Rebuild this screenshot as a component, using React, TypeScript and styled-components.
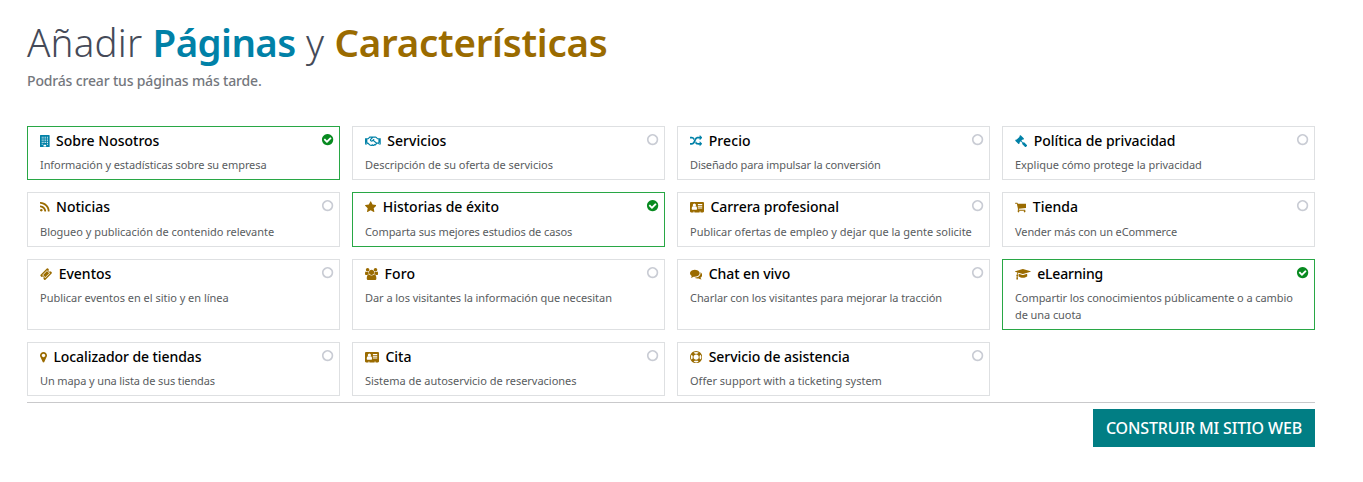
import React from 'react';
import styled, { createGlobalStyle } from 'styled-components';
import { FaRegHandshake } from 'react-icons/fa';

const GlobalStyle = createGlobalStyle`
  body {
    margin: 0;
    background: #fff;
    font-family: "Noto Sans", "Open Sans", sans-serif;
  }
`;

const BLUE = '#0081a7';
const GOLD = '#9a6b00';

const Page = styled.main`
  box-sizing: border-box;
  width: 1363px;
  height: 482px;
  padding: 15px 48px 0 27px;
`;

const Heading = styled.h1`
  margin: 0 0 1px;
  height: 54px;
  line-height: 54px;
  font-size: 38.5px;
  font-weight: 300;
  letter-spacing: 0.2px;
  color: #454a58;
  white-space: nowrap;
`;

const Accent = styled.span<{ $color: string; $track: number }>`
  font-weight: 600;
  color: ${(p) => p.$color};
  letter-spacing: ${(p) => p.$track}px;
`;

const Subtitle = styled.p`
  margin: 0 0 35px;
  height: 21px;
  line-height: 21px;
  font-size: 14px;
  font-weight: 500;
  letter-spacing: -0.16px;
  color: #74777d;
`;

const Grid = styled.section`
  display: grid;
  grid-template-columns: repeat(4, 313px);
  grid-template-rows: 54.4px 54.4px 71.2px 54.4px;
  gap: 12px;
`;

const Card = styled.article<{ $selected: boolean }>`
  position: relative;
  box-sizing: border-box;
  padding: 4px 12px 0;
  border: 1px solid ${(p) => (p.$selected ? '#28a745' : '#dee0e2')};
`;

const CardHeader = styled.header`
  display: flex;
  align-items: center;
  gap: 6.4px;
  height: 20px;
`;

const CardTitle = styled.h2<{ $track: number }>`
  margin: 0;
  font-size: 14px;
  line-height: 20px;
  font-weight: 500;
  color: #000;
  letter-spacing: ${(p) => p.$track}px;
  white-space: nowrap;
`;

const CardText = styled.p<{ $track: number }>`
  margin: 5.2px -4px 0 0;
  font-size: 11px;
  line-height: 17px;
  color: #595c60;
  letter-spacing: ${(p) => p.$track - 0.02}px;
`;

const IconBox = styled.span<{ $color: string }>`
  display: flex;
  flex: none;
  color: ${(p) => p.$color};

  svg {
    display: block;
    height: 12.25px;
    width: auto;
    fill: currentColor;
  }
`;

const StatusBadge = styled.span<{ $selected: boolean }>`
  position: absolute;
  top: 6px;
  right: 5px;
  color: ${(p) => (p.$selected ? '#088a20' : '#c9ccd4')};

  svg {
    display: block;
    width: 13.2px;
    height: 13.2px;
    fill: currentColor;
  }
`;

const Footer = styled.footer`
  display: flex;
  justify-content: flex-end;
  margin-top: 5.6px;
  padding-top: 6px;
  border-top: 1px solid #c9c9cb;
`;

const BuildButton = styled.button`
  width: 222px;
  height: 38px;
  padding: 0;
  border: 0;
  background: #017e84;
  color: #fff;
  font-family: inherit;
  font-size: 16px;
  font-weight: 500;
  letter-spacing: -0.14px;
  white-space: nowrap;
`;

const glyphs = {
  building: {
    box: '0 0 1408 1792',
    d: 'M1344 0q26 0 45 19t19 45v1664q0 26-19 45t-45 19h-1280q-26 0-45-19t-19-45v-1664q0-26 19-45t45-19zM256 256v128h128v-128zM512 256v128h128v-128zM768 256v128h128v-128zM1024 256v128h128v-128zM256 512v128h128v-128zM512 512v128h128v-128zM768 512v128h128v-128zM1024 512v128h128v-128zM256 768v128h128v-128zM512 768v128h128v-128zM768 768v128h128v-128zM1024 768v128h128v-128zM256 1024v128h128v-128zM512 1024v128h128v-128zM768 1024v128h128v-128zM1024 1024v128h128v-128zM256 1280v128h128v-128zM1024 1280v128h128v-128zM512 1408v256h384v-256z',
  },
  rss: {
    box: '192 0 1408 1792',
    d: 'M576 1344q0 80-56 136t-136 56-136-56-56-136 56-136 136-56 136 56 56 136zm512 123q2 28-17 48-18 21-47 21h-135q-25 0-43-16.5t-20-41.5q-22-229-184.5-391.5t-391.5-184.5q-25-2-41.5-20t-16.5-43v-135q0-29 21-47 17-17 43-17h5q160 13 306 80.5t259 181.5q114 113 181.5 259t80.5 306zm512 2q2 27-18 47-18 20-46 20h-143q-26 0-44.5-17.5t-19.5-42.5q-12-215-101-408.5t-231.5-336-336-231.5-408.5-102q-25-1-42.5-19.5t-17.5-43.5v-143q0-28 20-46 18-18 44-18h3q262 13 501.5 120t425.5 294q187 186 294 425.5t120 501.5z',
  },
  star: {
    box: '64 0 1664 1792',
    d: 'M1728 647q0 22-26 48l-363 354 86 500q1 7 1 20 0 21-10.5 35.5t-30.5 14.5q-19 0-40-12l-449-236-449 236q-22 12-40 12-21 0-31.5-14.5t-10.5-35.5q0-6 2-20l86-500-364-354q-25-27-25-48 0-37 56-46l502-73 225-455q19-41 49-41t49 41l225 455 502 73q56 9 56 46z',
  },
  users: {
    box: '-64 0 1920 1792',
    d: 'M529 896q-162 5-265 128h-134q-82 0-138-40.5t-56-118.5q0-353 124-353 6 0 43.5 21t97.5 42.5 119 21.5q67 0 133-23-5 37-5 66 0 139 81 256zm1071 637q0 120-73 189.5t-194 69.5h-874q-121 0-194-69.5t-73-189.5q0-53 3.5-103.5t14-109 26.5-108.5 43-97.5 62-81 85.5-53.5 111.5-20q10 0 43 21.5t73 48 107 48 135 21.5 135-21.5 107-48 73-48 43-21.5q61 0 111.5 20t85.5 53.5 62 81 43 97.5 26.5 108.5 14 109 3.5 103.5zm-1024-1277q0 106-75 181t-181 75-181-75-75-181 75-181 181-75 181 75 75 181zm704 384q0 159-112.5 271.5t-271.5 112.5-271.5-112.5-112.5-271.5 112.5-271.5 271.5-112.5 271.5 112.5 112.5 271.5zm576 225q0 78-56 118.5t-138 40.5h-134q-103-123-265-128 81-117 81-256 0-29-5-66 66 23 133 23 59 0 119-21.5t97.5-42.5 43.5-21q124 0 124 353zm-128-609q0 106-75 181t-181 75-181-75-75-181 75-181 181-75 181 75 75 181z',
  },
  ticket: {
    box: '0 0 1792 1792',
    d: 'M1024 452l316 316-572 572-316-316zm-211 979l618-618q19-19 19-45t-19-45l-362-362q-18-18-45-18t-45 18l-618 618q-19 19-19 45t19 45l362 362q18 18 45 18t45-18zm889-637l-907 908q-37 37-90.5 37t-90.5-37l-126-126q56-56 56-136t-56-136-136-56-136 56l-125-126q-37-37-37-90.5t37-90.5l907-906q37-37 90.5-37t90.5 37l125 125q-56 56-56 136t56 136 136 56 136-56l126 125q37 37 37 90.5t-37 90.5z',
  },
  gavel: {
    box: '0 0 1792 1792',
    d: 'M1771 1536q0 53-37 90l-107 108q-39 37-91 37-53 0-90-37l-363-364q-38-36-38-90 0-53 43-96l-256-256-126 126q-14 14-34 14t-34-14q2 2 12.5 12t12.5 13 10 11.5 10 13.5 6 13.5 5.5 16.5 1.5 18q0 38-28 68-3 3-16.5 18t-19 20.5-18.5 16.5-22 15.5-22 9-26 4.5q-40 0-68-28l-408-408q-28-28-28-68 0-13 4.5-26t9-22 15.5-22 16.5-18.5 20.5-19 18-16.5q30-28 68-28 10 0 18 1.5t16.5 5.5 13.5 6 13.5 10 11.5 10 13 12.5 12 12.5q-14-14-14-34t14-34l348-348q14-14 34-14t34 14q-2-2-12.5-12t-12.5-13-10-11.5-10-13.5-6-13.5-5.5-16.5-1.5-18q0-38 28-68 3-3 16.5-18t19-20.5 18.5-16.5 22-15.5 22-9 26-4.5q40 0 68 28l408 408q28 28 28 68 0 13-4.5 26t-9 22-15.5 22-16.5 18.5-20.5 19-18 16.5q-30 28-68 28-10 0-18-1.5t-16.5-5.5-13.5-6-13.5-10-11.5-10-13-12.5-12-12.5q14 14 14 34t-14 34l-126 126 256 256q43-43 96-43 52 0 91 37l363 363q37 39 37 91z',
  },
  random: {
    box: '0 0 1792 1792',
    d: 'M666 481q-60 92-137 273-22-45-37-72.5t-40.5-63.5-51-56.5-63-35-81.5-14.5h-224q-14 0-23-9t-9-23v-192q0-14 9-23t23-9h224q250 0 410 225zm1126 799q0 14-9 23l-320 320q-9 9-23 9-13 0-22.5-9.5t-9.5-22.5v-192q-32 0-85 .5t-81 1-73-1-71-5-64-10.5-63-18.5-58-28.5-59-40-55-53.5-56-69.5q59-93 136-273 22 45 37 72.5t40.5 63.5 51 56.5 63 35 81.5 14.5h256v-192q0-14 9-23t23-9q12 0 24 10l319 319q9 9 9 23zm0-896q0 14-9 23l-320 320q-9 9-23 9-13 0-22.5-9.5t-9.5-22.5v-192h-256q-48 0-87 15t-69 45-51 61.5-45 77.5q-32 62-78 171-29 66-49.5 111t-54 105-64 100-74 83-90 68.5-106.5 42-128 16.5h-224q-14 0-23-9t-9-23v-192q0-14 9-23t23-9h224q48 0 87-15t69-45 51-61.5 45-77.5q32-62 78-171 29-66 49.5-111t54-105 64-100 74-83 90-68.5 106.5-42 128-16.5h256v-192q0-14 9-23t23-9q12 0 24 10l319 319q9 9 9 23z',
  },
  cart: {
    box: '64 0 1664 1792',
    d: 'M704 1536q0 52-38 90t-90 38-90-38-38-90 38-90 90-38 90 38 38 90zm896 0q0 52-38 90t-90 38-90-38-38-90 38-90 90-38 90 38 38 90zm128-1088v512q0 24-16.5 42.5t-40.5 21.5l-1044 122q13 60 13 70 0 16-24 64h920q26 0 45 19t19 45-19 45-45 19h-1024q-26 0-45-19t-19-45q0-11 8-31.5t16-36 21.5-40 15.5-29.5l-177-823h-204q-26 0-45-19t-19-45 19-45 45-19h256q16 0 28.5 6.5t19.5 15.5 13 24.5 8 26 5.5 29.5 4.5 26h1201q26 0 45 19t19 45z',
  },
  comments: {
    box: '0 0 1792 1792',
    d: 'M1408 768q0 139-94 257t-256.5 186.5-353.5 68.5q-86 0-176-16-124 88-278 128-36 9-86 16h-3q-11 0-20.5-8t-11.5-21q-1-3-1-6.5t.5-6.5 2-6l2.5-5 3.5-5.5 4-5 4.5-5 4-4.5q5-6 23-25t26-29.5 22.5-29 25-38.5 20.5-44q-124-72-195-177t-71-224q0-139 94-257t256.5-186.5 353.5-68.5 353.5 68.5 256.5 186.5 94 257zm384 256q0 120-71 224.5t-195 176.5q10 24 20.5 44t25 38.5 22.5 29 26 29.5 23 25q1 1 4 4.5t4.5 5 4 5 3.5 5.5l2.5 5 2 6 .5 6.5-1 6.5q-3 14-13 22t-22 7q-50-7-86-16-154-40-278-128-90 16-176 16-271 0-472-132 58 4 88 4 161 0 309-45t264-129q125-92 192-212t67-254q0-77-23-152 129 71 204 178t75 230z',
  },
  graduation: {
    box: '0 0 2304 1792',
    d: 'M1774 836l18 316q4 69-82 128t-235 93.5-323 34.5-323-34.5-235-93.5-82-128l18-316 574 181q22 7 48 7t48-7zm530-324q0 23-22 31l-1120 352q-4 1-10 1t-10-1l-652-206q-43 34-71 111.5t-34 178.5q63 36 63 109 0 69-58 107l58 433q2 14-8 25-9 11-24 11h-192q-15 0-24-11-10-11-8-25l58-433q-58-38-58-107 0-73 65-111 11-207 98-330l-333-104q-22-8-22-31t22-31l1120-352q4-1 10-1t10 1l1120 352q22 8 22 31z',
  },
  marker: {
    box: '384 0 1024 1792',
    d: 'M1152 640q0-106-75-181t-181-75-181 75-75 181 75 181 181 75 181-75 75-181zm256 0q0 109-33 179l-364 774q-16 33-47.5 52t-67.5 19-67.5-19-46.5-52l-365-774q-33-70-33-179 0-212 150-362t362-150 362 150 150 362z',
  },
  lifeRing: {
    box: '0 0 1792 1792',
    d: 'M896 0q182 0 348 71t286 191 191 286 71 348-71 348-191 286-286 191-348 71-348-71-286-191-191-286-71-348 71-348 191-286 286-191 348-71zm0 128q-190 0-361 90l194 194q82-28 167-28t167 28l194-194q-171-90-361-90zm-678 1129l194-194q-28-82-28-167t28-167l-194-194q-90 171-90 361t90 361zm678 407q190 0 361-90l-194-194q-82 28-167 28t-167-28l-194 194q171 90 361 90zm0-384q159 0 271.5-112.5t112.5-271.5-112.5-271.5-271.5-112.5-271.5 112.5-112.5 271.5 112.5 271.5 271.5 112.5zm484-217l194 194q90-171 90-361t-90-361l-194 194q28 82 28 167t-28 167z',
  },
  addressCard: {
    box: '0 0 2048 1792',
    d: 'M160 128h1728q66 0 113 47t47 113v1216q0 66-47 113t-113 47h-352v-96q0-14-9-23t-23-9h-64q-14 0-23 9t-9 23v96h-768v-96q0-14-9-23t-23-9h-64q-14 0-23 9t-9 23v96h-352q-66 0-113-47t-47-113v-1216q0-66 47-113t113-47zM1024 1131q0-210-72-299t-160-89q-80 77-152 77t-152-77q-88 0-160 89t-72 299q0 63 36 106t92 43h512q56 0 92-43t36-106zM870 612q0-95-67-162t-163-67-163 67-67 162 67 162 163 67 163-67 67-162zM1792 1056v-64q0-14-9-23t-23-9h-576q-14 0-23 9t-9 23v64q0 14 9 23t23 9h576q14 0 23-9t9-23zM1792 800v-64q0-14-9-23t-23-9h-576q-14 0-23 9t-9 23v64q0 14 9 23t23 9h576q14 0 23-9t9-23zM1792 544v-64q0-14-9-23t-23-9h-576q-14 0-23 9t-9 23v64q0 14 9 23t23 9h576q14 0 23-9t9-23z',
  },
  checkCircle: {
    box: '0 0 1792 1792',
    d: 'M1412 734q0-28-18-46l-91-90q-19-19-45-19t-45 19l-408 407-226-226q-19-19-45-19t-45 19l-91 90q-18 18-18 46 0 27 18 45l362 362q19 19 45 19 27 0 46-19l543-543q18-18 18-45zm252 162q0 209-103 385.5t-279.5 279.5-385.5 103-385.5-103-279.5-279.5-103-385.5 103-385.5 279.5-279.5 385.5-103 385.5 103 279.5 279.5 103 385.5z',
  },
  circle: {
    box: '0 0 1792 1792',
    d: 'M896 352q-148 0-273 73t-198 198-73 273 73 273 198 198 273 73 273-73 198-198 73-273-73-273-198-198-273-73zm768 544q0 209-103 385.5t-279.5 279.5-385.5 103-385.5-103-279.5-279.5-103-385.5 103-385.5 279.5-279.5 385.5-103 385.5 103 279.5 279.5 103 385.5z',
  },
};

type GlyphName = keyof typeof glyphs;

const HandshakeBox = styled(IconBox)`
  svg {
    width: 15.75px;
    height: 12.6px;
  }
`;

function Glyph({ name }: { name: GlyphName }) {
  const { box, d } = glyphs[name];
  return (
    <svg viewBox={box} aria-hidden="true">
      <path d={d} fillRule={name === 'building' || name === 'addressCard' ? 'evenodd' : 'nonzero'} />
    </svg>
  );
}

interface Feature {
  icon: GlyphName | 'handshake';
  color: string;
  title: string;
  titleTrack: number;
  text: string;
  textTrack: number;
  selected?: boolean;
}

const features: Feature[] = [
  { icon: 'building', color: BLUE, title: 'Sobre Nosotros', titleTrack: 0, text: 'Información y estadísticas sobre su empresa', textTrack: -0.06, selected: true },
  { icon: 'handshake', color: BLUE, title: 'Servicios', titleTrack: 0.05, text: 'Descripción de su oferta de servicios', textTrack: 0 },
  { icon: 'random', color: BLUE, title: 'Precio', titleTrack: 0.1, text: 'Diseñado para impulsar la conversión', textTrack: -0.09 },
  { icon: 'gavel', color: BLUE, title: 'Política de privacidad', titleTrack: -0.03, text: 'Explique cómo protege la privacidad', textTrack: -0.015 },
  { icon: 'rss', color: GOLD, title: 'Noticias', titleTrack: 0, text: 'Blogueo y publicación de contenido relevante', textTrack: 0 },
  { icon: 'star', color: GOLD, title: 'Historias de éxito', titleTrack: -0.02, text: 'Comparta sus mejores estudios de casos', textTrack: -0.06, selected: true },
  { icon: 'addressCard', color: GOLD, title: 'Carrera profesional', titleTrack: -0.04, text: 'Publicar ofertas de empleo y dejar que la gente solicite', textTrack: 0 },
  { icon: 'cart', color: GOLD, title: 'Tienda', titleTrack: 0, text: 'Vender más con un eCommerce', textTrack: -0.08 },
  { icon: 'ticket', color: GOLD, title: 'Eventos', titleTrack: 0, text: 'Publicar eventos en el sitio y en línea', textTrack: 0 },
  { icon: 'users', color: GOLD, title: 'Foro', titleTrack: 0.15, text: 'Dar a los visitantes la información que necesitan', textTrack: -0.035 },
  { icon: 'comments', color: GOLD, title: 'Chat en vivo', titleTrack: -0.06, text: 'Charlar con los visitantes para mejorar la tracción', textTrack: -0.043 },
  { icon: 'graduation', color: GOLD, title: 'eLearning', titleTrack: -0.18, text: 'Compartir los conocimientos públicamente o a cambio de una cuota', textTrack: -0.06, selected: true },
  { icon: 'marker', color: GOLD, title: 'Localizador de tiendas', titleTrack: -0.08, text: 'Un mapa y una lista de sus tiendas', textTrack: -0.1 },
  { icon: 'addressCard', color: GOLD, title: 'Cita', titleTrack: 0, text: 'Sistema de autoservicio de reservaciones', textTrack: 0 },
  { icon: 'lifeRing', color: GOLD, title: 'Servicio de asistencia', titleTrack: -0.05, text: 'Offer support with a ticketing system', textTrack: 0.03 },
];

function FeatureCard({ feature }: { feature: Feature }) {
  const selected = Boolean(feature.selected);
  return (
    <Card $selected={selected}>
      <CardHeader>
        {feature.icon === 'handshake' ? (
          <HandshakeBox $color={feature.color}>
            <FaRegHandshake />
          </HandshakeBox>
        ) : (
          <IconBox $color={feature.color}>
            <Glyph name={feature.icon} />
          </IconBox>
        )}
        <CardTitle $track={feature.titleTrack}>{feature.title}</CardTitle>
      </CardHeader>
      <CardText $track={feature.textTrack}>{feature.text}</CardText>
      <StatusBadge $selected={selected}>
        <Glyph name={selected ? 'checkCircle' : 'circle'} />
      </StatusBadge>
    </Card>
  );
}

export default function App() {
  return (
    <>
      <GlobalStyle />
      <Page>
        <Heading>
          Añadir <Accent $color={BLUE} $track={-0.6}>Páginas</Accent> y{' '}
          <Accent $color={GOLD} $track={-0.25}>Características</Accent>
        </Heading>
        <Subtitle>Podrás crear tus páginas más tarde.</Subtitle>
        <Grid>
          {features.map((feature) => (
            <FeatureCard key={feature.title} feature={feature} />
          ))}
        </Grid>
        <Footer>
          <BuildButton type="button">CONSTRUIR MI SITIO WEB</BuildButton>
        </Footer>
      </Page>
    </>
  );
}
